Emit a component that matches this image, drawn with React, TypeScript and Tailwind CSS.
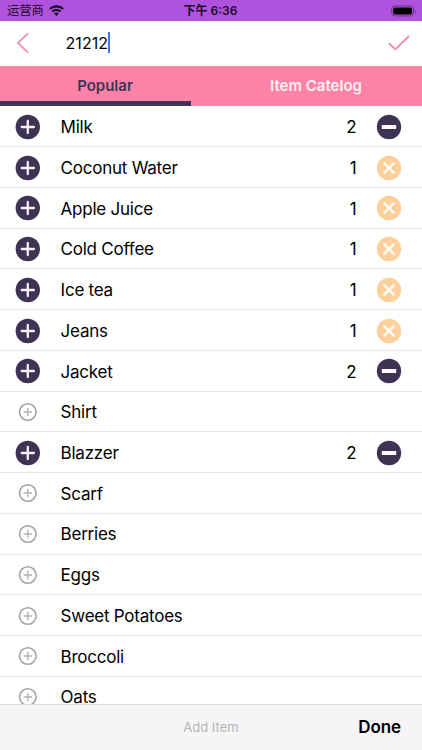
type Item = { name: string; count: number };

const items: Item[] = [
  { name: 'Milk', count: 2 },
  { name: 'Coconut Water', count: 1 },
  { name: 'Apple Juice', count: 1 },
  { name: 'Cold Coffee', count: 1 },
  { name: 'Ice tea', count: 1 },
  { name: 'Jeans', count: 1 },
  { name: 'Jacket', count: 2 },
  { name: 'Shirt', count: 0 },
  { name: 'Blazzer', count: 2 },
  { name: 'Scarf', count: 0 },
  { name: 'Berries', count: 0 },
  { name: 'Eggs', count: 0 },
  { name: 'Sweet Potatoes', count: 0 },
  { name: 'Broccoli', count: 0 },
  { name: 'Oats', count: 0 },
];

function AddIcon({ active }: { active: boolean }) {
  return active ? (
    <svg className="mt-px size-[26px]" viewBox="0 0 26 26">
      <circle cx="12.8" cy="13" r="12.2" fill="#3f3354" />
      <path d="M12.8 6.9v12.2M6.7 13h12.2" stroke="#f4f2f6" strokeWidth="2.3" strokeLinecap="round" />
    </svg>
  ) : (
    <svg className="mt-px size-[26px]" viewBox="0 0 26 26" fill="none" stroke="#a3a3a3">
      <circle cx="12.8" cy="13" r="8.3" strokeWidth="1.6" />
      <path d="M12.8 8.8v8.4M8.6 13h8.4" stroke="#b4b4b4" strokeWidth="1.4" />
    </svg>
  );
}

function RemoveIcon({ count }: { count: number }) {
  return count > 1 ? (
    <svg className="mt-px size-[26px]" viewBox="0 0 26 26">
      <circle cx="13" cy="13" r="12.2" fill="#3f3354" />
      <rect x="5.8" y="10.9" width="14.4" height="4.2" rx="0.7" fill="#fff" />
    </svg>
  ) : (
    <svg className="mt-px size-[26px]" viewBox="0 0 26 26">
      <circle cx="13" cy="13" r="12.2" fill="#fdd09b" />
      <path d="M8.3 8.3l9.4 9.4M17.7 8.3l-9.4 9.4" stroke="#fffaf3" strokeWidth="2.6" strokeLinecap="round" />
    </svg>
  );
}

function Row({ item }: { item: Item }) {
  return (
    <li className="flex h-[40.73px] shrink-0 items-center border-b border-[#e9e9eb] pl-[15px] pr-5 text-[17px] text-black">
      <AddIcon active={item.count > 0} />
      <span className="ml-[19.6px] flex-1 pt-[3px] tracking-[-0.24px]">{item.name}</span>
      {item.count > 0 && (
        <>
          <span className="mr-[19.3px] pt-[3px]">{item.count}</span>
          <RemoveIcon count={item.count} />
        </>
      )}
    </li>
  );
}

function StatusBar() {
  return (
    <div className="grid h-[21px] shrink-0 grid-cols-3 items-center bg-[#af52de] pl-[7px] pr-[6px] text-[12px] text-[#1d0b29]">
      <div className="flex items-center gap-[5px]">
        <span className="pt-px text-[12.3px]">运营商</span>
        <svg className="h-[11px] w-[15px]" viewBox="0 0 15 11" fill="none" stroke="#12051b">
          <path d="M0.9 4.1a9.4 9.4 0 0 1 13.2 0" strokeWidth="2.1" />
          <path d="M3.4 6.6a5.9 5.9 0 0 1 8.2 0" strokeWidth="2" />
          <path d="M7.5 10.9L5.2 8.6a3.3 3.3 0 0 1 4.6 0z" fill="#12051b" stroke="none" />
        </svg>
      </div>
      <span className="pr-[2px] pt-px text-center font-semibold">下午 6:36</span>
      <svg className="h-[12px] w-[26px] justify-self-end" viewBox="0 0 26 12">
        <rect x="1.7" y="0.9" width="21.8" height="10" rx="3" fill="none" stroke="#6d3390" />
        <rect x="3.2" y="2.4" width="18.8" height="7" rx="1.6" fill="#000" />
        <path d="M24.6 4.2c1.3.5 1.3 3.1 0 3.6z" fill="#6d3390" />
      </svg>
    </div>
  );
}

export default function App() {
  return (
    <div className="flex h-[750px] w-[422px] flex-col overflow-hidden bg-white font-['Inter','Noto_Sans_CJK_SC',sans-serif]">
      <StatusBar />
      <header className="flex h-[44.5px] shrink-0 items-center pb-[1.5px] pl-4 pr-3">
        <svg className="h-[22px] w-[13px]" viewBox="0 0 13 22" fill="none" stroke="#f48fb1" strokeWidth="1.8">
          <path d="M12 1.3L2 11l10 9.7" />
        </svg>
        <div className="ml-[36.5px] flex flex-1 items-center">
          <span className="text-[16px] tracking-[0.06px] text-black">21212</span>
          <span className="h-[21px] w-[2px] bg-[#4a6fe0]" />
        </div>
        <svg className="h-[16px] w-[22px]" viewBox="0 0 22 16" fill="none" stroke="#f48fb1" strokeWidth="2">
          <path d="M1 8.2l6.3 6.2L21 1" />
        </svg>
      </header>
      <nav className="flex h-[40.5px] shrink-0 bg-[#fc83a7] text-[15px] font-semibold">
        <button className="w-[191px] border-b-[5px] border-[#403456] pl-[19px] pt-1 leading-[31px] text-[#403456]">Popular</button>
        <button className="flex-1 pl-[19px] pt-px text-[#fff0f5]">Item Catelog</button>
      </nav>
      <ul className="flex min-h-0 flex-1 flex-col overflow-hidden pt-[0.6px]">
        {items.map((item) => (
          <Row key={item.name} item={item} />
        ))}
      </ul>
      <footer className="grid h-[46px] shrink-0 grid-cols-3 items-center border-t border-[#dddcde] bg-[#f6f4f6] pr-[21px] pl-[21px]">
        <span className="col-start-2 pt-px text-center text-[13px] text-[#b5b4b6]">Add Item</span>
        <button className="pt-px text-right text-[17px] font-semibold tracking-[-0.1px] text-black">Done</button>
      </footer>
    </div>
  );
}
